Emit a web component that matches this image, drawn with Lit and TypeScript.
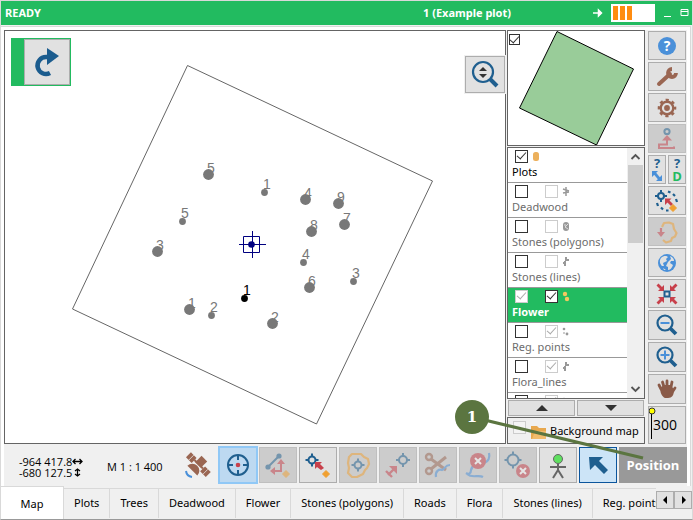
import { LitElement, html, svg, css } from "lit";
import { customElement, property, state } from "lit/decorators.js";
import { classMap } from "lit/directives/class-map.js";

const BLUE = "#1f5f8f";
const SKY = "#4a90d9";
const RED = "#c8404b";
const BROWN = "#9a6652";
const ORANGE = "#f0a030";

const crosshair = (x: number, y: number, r: number) => svg`
  <g transform="translate(${x} ${y})" fill="none" stroke=${BLUE} stroke-width="2">
    <circle r=${r}></circle>
    <path d="M0 ${-r}v-3M0 ${r}v3M${-r} 0h-3M${r} 0h3"></path>
  </g>`;

const lens = svg`
  <circle cx="-2" cy="-2" r="7.500" fill="none" stroke=${BLUE} stroke-width="2.200"></circle>
  <path d="M3.500 3.500L9 9" stroke=${BLUE} stroke-width="3.800"></path>`;

const cancel = (x: number, y: number, r: number) => svg`
  <circle cx=${x} cy=${y} r=${r} fill=${RED}></circle>
  <path transform="translate(${x} ${y})" d="M-3-3L3 3M3-3L-3 3" stroke="#fff" stroke-width="2"></path>`;

const inward = svg`<path d="M-10.500-8.500L-8.500-10.500L-5-7L-3-9V-3H-9L-7-5z" fill=${RED}></path>`;

const icons: Record<string, unknown> = {
  help: svg`<circle r="9" fill=${SKY}></circle>
    <text y="5" text-anchor="middle" class="glyph" font-size="14" fill="#fff">?</text>`,
  wrench: svg`<path d="M-8 7L3-3" stroke=${BROWN} stroke-width="4" stroke-linecap="round"></path>
    <path d="M5-8A4 4 0 1 0 9-4" fill="none" stroke=${BROWN} stroke-width="3.800"></path>`,
  gear: svg`<circle r="6.300" fill="none" stroke=${BROWN} stroke-width="2.400"></circle>
    <circle r="8" fill="none" stroke=${BROWN} stroke-width="2.600" stroke-dasharray="3.140 3.140" stroke-dashoffset="1.570"></circle>
    <circle r="2.900" fill=${BROWN}></circle>`,
  raise: svg`<circle cy="-7.500" r="2.600" fill="none" stroke=${BLUE} stroke-width="2"></circle>
    <path d="M0-4L5 1.500h-10z" fill=${RED}></path>
    <path d="M0 1V5.500H-8V9H7V7.500" fill="none" stroke=${RED} stroke-width="2"></path>`,
  helpMove: svg`<text y="-2" text-anchor="middle" class="glyph" font-size="13" fill=${BLUE}>?</text>
    <path d="M-5 1h6l-6 6zM5 11h-6l6-6zM-3.500 4L-1.500 2L3.500 8L1.500 10z" fill=${SKY}></path>`,
  helpData: svg`<text y="-2" text-anchor="middle" class="glyph" font-size="13" fill=${BLUE}>?</text>
    <text y="11" text-anchor="middle" class="glyph" font-size="13" fill="#22bb60">D</text>`,
  trace: svg`${crosshair(-6, -5, 3)}
    <path d="M-2-2.500h6.500L2.500-.5L6 3L4 5L.5 1.500L-2 4z" fill=${RED}></path>
    <path d="M1-9.500l2.500 1M6-7l2 2M9-2l1 3M-10 2l1 3M-6 6.500l2 2M-1 9.500l2.500 0" stroke=${BLUE} stroke-width="2.200"></path>
    <path d="M6 3.500l3.500 3.500l-3.500 3.500l-3.500-3.500z" fill=${ORANGE} stroke=${ORANGE}></path>`,
  lasso: svg`<path d="M-5-5L-3-9L2-9.500L6-8L7-3L9.500 1L8 4.500L5 6L4 9L-1 10.500L-4 8" fill="none" stroke=${ORANGE} stroke-width="2.200" stroke-linejoin="round"></path>
    <path d="M-6-4V1" stroke=${RED} stroke-width="2.200"></path><path d="M-10 0h8L-6 5z" fill=${RED}></path>`,
  globe: svg`<circle r="9" fill=${SKY}></circle>
    <path d="M-6-5C-3-8 0-7 1-6L-1-4L0-2L-4 0L-3 3L-5 3C-7 1-8-2-6-5zM3-7C6-6 7-4 7-2L4-2L3 0L6 2C5 5 3 7 1 7L1 4L-1 3L1-1L4-4zM-4 5L-1 7L-3 7z" fill="#e1e1e1"></path>`,
  center: svg`${inward}<g transform="rotate(90)">${inward}</g><g transform="rotate(180)">${inward}</g><g transform="rotate(270)">${inward}</g>
    <rect x="-2.500" y="-2.500" width="5" height="5" fill="#e1e1e1" stroke=${BLUE} stroke-width="2"></rect>`,
  zoomOut: svg`${lens}<path d="M-6.500-2h9" stroke=${SKY} stroke-width="2"></path>`,
  zoomIn: svg`${lens}<path d="M-6.500-2h9M-2-6.500v9" stroke=${SKY} stroke-width="2"></path>`,
  hand: svg`<path d="M-6 0L-8-4M-3-2L-4.500-7M0-3L0-8M4-2L5-7M6 2L8-1" stroke="#8a5a48" stroke-width="2.800" stroke-linecap="round"></path>
    <path d="M-7-1L-3-4L4-4L7 1C7 6 5 9 1 9H-2C-5 8-7 3-7-1z" fill="#8a5a48"></path>`,
  target: svg`<circle r="10" fill="none" stroke=${BLUE} stroke-width="2"></circle>
    <path d="M0-10v5M0 10v-5M-10 0h5M10 0h-5" stroke=${BLUE} stroke-width="2"></path><circle r="2.300" fill=${RED}></circle>`,
  editLine: svg`<path d="M-10 2L1-9" stroke=${BLUE} stroke-width="2"></path>
    <circle cx="-10" cy="2" r="2.600" fill=${BLUE}></circle><circle cx="1" cy="-9" r="2.600" fill=${BLUE}></circle>
    <path d="M3-2V6H-4" fill="none" stroke=${RED} stroke-width="2"></path>
    <path d="M3-6l4 5h-8zM-8 6l5-4v8z" fill=${RED}></path><path d="M8 5.500l3.500 3.500l-3.500 3.500l-3.500-3.500z" fill=${ORANGE} stroke=${ORANGE}></path>`,
  addPoint: svg`${crosshair(-6, -5, 3.5)}
    <path d="M-3-3h7L2-1L6 3L3 5L-1 2L-3 4z" fill=${RED}></path><path d="M8 5.500l3.500 3.500l-3.500 3.500l-3.500-3.500z" fill=${ORANGE} stroke=${ORANGE}></path>`,
  polygon: svg`<path d="M-6-11H3L6-8L10-6L11-1L9 3L7 5L5 9L-1 12H-6L-10 8L-9 3L-10-2L-9-8z" fill="none" stroke=${ORANGE} stroke-width="2.200" stroke-linejoin="round"></path>
    ${crosshair(0, 0, 3.5)}`,
  shift: svg`${crosshair(5, -5, 4)}<path d="M-10 10L-4 4M-12 6L-6 12" stroke=${RED} stroke-width="2.400"></path>
    <path d="M-1 1v8l-8-8z" fill=${RED}></path>`,
  scissors: svg`<g stroke=${BROWN} stroke-width="2.400" fill="none"><circle cx="-9" cy="-8" r="3"></circle><circle cx="-9" cy="6" r="3"></circle>
    <path d="M-7-6L8 5M-7 4L8-8" stroke-width="3"></path></g>
    <path d="M-2 12C-3 6 1 4 4 5C7 4 7 0 12 0" fill="none" stroke=${SKY} stroke-width="2.200"></path>`,
  dropLine: svg`<path d="M-12 8C-9 10-7 8-7 5C-6 0 0-3 5-2C11-3 12-8 11-12M-11 9C-5 14 0 9 5 12" fill="none" stroke=${SKY} stroke-width="2.200"></path>
    ${cancel(0, -4, 8)}`,
  dropPoint: svg`${crosshair(-5, -5, 5.5)}${cancel(5, 6, 7)}`,
  person: svg`<path d="M0-1V6M-8 2H8M0 5L-5 13M0 5L5 13" fill="none" stroke="#666" stroke-width="2"></path>
    <circle cy="-6" r="4.500" fill="#5fe060" stroke="#666"></circle>`,
  pointer: svg`<path d="M-9-8H5L1-4L10 5L6 9L-3 0L-8 5z" fill=${BLUE}></path>`,
  scale: svg`<circle cx="-2" cy="-3" r="10" fill="none" stroke=${BLUE} stroke-width="2.200"></circle>
    <path d="M5 4L12 11" stroke=${BLUE} stroke-width="4"></path>
    <path d="M-2-8l4 4h-8zM-2 3l4-4h-8z" fill="#333"></path>`,
  redo: svg`<path d="M2-5H-1A8.500 8.500 0 1 0 3 11" fill="none" stroke="#1b5c8e" stroke-width="4.500"></path>
    <path d="M0-14L12-6L0 3z" fill="#1b5c8e"></path>`,
  satellite: svg`<g transform="rotate(45)" fill=${BROWN}><rect x="-14" y="-4" width="8" height="7"></rect><rect x="6" y="-4" width="8" height="7"></rect>
    <rect x="-4" y="-9" width="8" height="9"></rect><rect x="-6" y="-2" width="12" height="2"></rect><path d="M-7 8A7 7 0 0 1 7 8z"></path>
    <path d="M-10-4v7M10-4v7" stroke="#f0f0f0" stroke-width=".7"></path></g>
    <path d="M-12 6A7 7 0 0 0-6 12" fill="none" stroke=${SKY} stroke-width="2"></path>`,
};

@customElement("tool-icon")
class ToolIcon extends LitElement {
  static styles = css`
    :host { display: block; flex: none; width: 28px; height: 28px; }
    svg { display: block; overflow: visible; }
    .glyph { font-family: "Open Sans", sans-serif; font-weight: 700; }
  `;
  @property() name = "";
  render() {
    return html`<svg width="28" height="28" viewBox="-14 -14 28 28" aria-hidden="true">${icons[this.name]}</svg>`;
  }
}

type Dot = [number, number, string];
const trees: Dot[] = [
  [208, 174, "5"], [305, 199, "4"], [338, 203, "9"], [344, 224, "7"], [311, 231, "8"],
  [157, 251, "3"], [309, 287, "6"], [189, 309, "1"], [272, 323, "2"],
];
const herbs: Dot[] = [[264, 192, "1"], [182, 221, "5"], [303, 262, "4"], [353, 281, "3"], [211, 315, "2"]];

@customElement("plot-map")
class PlotMap extends LitElement {
  static styles = css`
    :host { display: block; position: relative; min-height: 0; background: #fff; border: 1px solid #646464; font-family: "Liberation Sans", Arial, sans-serif; }
    .canvas { display: block; width: 100%; height: 100%; }
    .num { font-size: 14px; fill: #787878; }
    .dot { fill: #787878; }
    .current { fill: #000; }
    button { display: grid; place-items: center; padding: 0; border: 1px solid #adadad; background: #e1e1e1; }
    .undo { position: absolute; left: 6px; top: 7px; width: 60px; height: 48px; box-sizing: border-box; display: flex; padding: 1px 1px 1px 13px; background: #22bb60; }
    .undo button { flex: 1; }
    .scale { position: absolute; right: 0; top: 25px; width: 40px; height: 37px; outline: 1px solid #f0f0f0; }
  `;
  private mark([x, y, n]: Dot, r: number, lift: number, current = false) {
    return svg`<circle class=${current ? "current" : "dot"} cx=${x + 0.5} cy=${y + 0.5} r=${r}></circle>
      <text class=${current ? "num current" : "num"} x=${x - 1} y=${y - lift}>${n}</text>`;
  }
  render() {
    return html`
      <svg class="canvas" viewBox="5 31 500 412" role="img" aria-label="Plot map">
        <path d="M187.500 65.500L432.500 181L316.500 424L72.500 309z" fill="none" stroke="#666" stroke-width="1"></path>
        ${trees.map((t) => this.mark(t, 5.4, 1))}
        ${herbs.map((t) => this.mark(t, 3.4, 3))}
        ${this.mark([244, 298, "1"], 3.4, 3, true)}
        <path d="M243.500 236.500h16v16h-16zM239 244.500h27M252.500 231v27" fill="none" stroke="#000080"></path>
        <circle cx="251.500" cy="244.500" r="3.300" fill="#000080"></circle>
      </svg>
      <div class="undo"><button aria-label="Repeat"><tool-icon name="redo"></tool-icon></button></div>
      <button class="scale" aria-label="Set scale"><tool-icon name="scale"></tool-icon></button>
    `;
  }
}

interface Layer { name: string; shown: boolean; edit?: boolean; locked?: boolean; kind: string; state?: string }
const layers: Layer[] = [
  { name: "Plots", shown: true, kind: "area", state: "strong" },
  { name: "Deadwood", shown: false, edit: false, kind: "wood" },
  { name: "Stones (polygons)", shown: false, edit: false, kind: "stone" },
  { name: "Stones (lines)", shown: false, edit: false, kind: "line" },
  { name: "Flower", shown: true, edit: true, locked: true, kind: "flower", state: "selected" },
  { name: "Reg. points", shown: false, edit: true, kind: "points" },
  { name: "Flora_lines", shown: false, edit: true, kind: "line" },
  { name: "", shown: false, edit: true, kind: "points" },
];
const symbols: Record<string, unknown> = {
  area: svg`<rect x="3" y="1" width="6" height="9" rx="2.500" fill="#ecb05c"></rect>`,
  wood: svg`<path d="M6 1V10M3 3L9 5M3 7L9 6" stroke="#999" stroke-width="1.500"></path>`,
  stone: svg`<rect x="3" y="1" width="6" height="9" rx="3" fill="#999"></rect><path d="M8 3L5 6L8 8M4 4h2" stroke="#ddd" fill="none"></path>`,
  line: svg`<path d="M6 1V5M5 5V10M3 7H6M6 4H9" stroke="#999" stroke-width="2"></path>`,
  flower: svg`<circle cx="5" cy="3" r="2.200" fill="#f4c860"></circle><circle cx="7" cy="8" r="2.200" fill="#f4c860"></circle>`,
  points: svg`<circle cx="4" cy="3" r="1.300" fill="#999"></circle><circle cx="7" cy="8" r="1.400" fill="#999"></circle><circle cx="4" cy="7" r="1" fill="#bbb"></circle>`,
};

const tick = css`
  input[type="checkbox"] { appearance: none; flex: none; display: grid; place-items: center; width: 13px; height: 13px; margin: 0; border: 1px solid #333; background: #fff; }
  input[type="checkbox"]:checked::after { content: ""; width: 8px; height: 4px; margin-top: -3px; border: solid #333; border-width: 0 0 1px 1px; transform: rotate(-48deg); }
  input[type="checkbox"].faint { border-color: #ccc; }
  input[type="checkbox"].faint:checked::after { border-color: #aaa; }
`;

@customElement("layer-panel")
class LayerPanel extends LitElement {
  static styles = [tick, css`
    :host { display: flex; flex-direction: column; gap: 1px; min-height: 0; font: 11px/16px "Noto Sans", sans-serif; }
    .overview { display: grid; flex: none; height: 114px; border: 1px solid #646464; background: #fff; }
    .overview > * { grid-area: 1 / 1; }
    .overview svg { width: 100%; height: 114px; }
    .overview input { margin: 3px 1px; width: 11px; height: 11px; }
    .list { display: flex; flex: 1; min-height: 0; overflow: hidden; border: 1px solid #646464; background: #fff; }
    ul { flex: 1; min-width: 0; margin: 0; padding: 0; overflow: hidden; list-style: none; }
    li { box-sizing: border-box; height: 35px; padding: 1px 0 0 4px; border-bottom: 1px solid #999; color: #6c6c6c; }
    .row { display: flex; align-items: center; height: 14px; padding-left: 3px; }
    .row .edit { margin-left: 17px; }
    .row svg { margin-left: 2px; }
    .name { display: block; margin-top: 1px; white-space: nowrap; }
    .strong { color: #000; }
    .selected { background: #22bb60; color: #fff; font-weight: 700; }
    .bar { display: flex; flex-direction: column; width: 17px; background: #f0f0f0; }
    .bar svg { flex: none; }
    .thumb { height: 78px; margin: 0 1px; background: #cdcdcd; }
    .space { flex: 1; }
    .order { display: flex; flex: none; gap: 2px; padding: 0 1px; background: #f0f0f0; }
    .order button { flex: 1; display: grid; place-items: center; height: 16px; padding: 0; border: 1px solid #adadad; background: #e1e1e1; }
    .base { display: flex; flex: none; align-items: center; height: 25px; padding-left: 5px; border: 1px solid #646464; background: #f0f0f0; color: #000; white-space: nowrap; }
    .base input { background: #f4f4f4; margin-bottom: 6px; }
    .base svg { margin: 2px 4px 0 5px; }
  `];
  private item(l: Layer) {
    return html`<li class=${l.state ?? ""}>
      <div class="row">
        <input type="checkbox" class=${l.locked ? "faint" : ""} aria-label="Show ${l.name}" .checked=${l.shown}>
        ${l.edit === undefined ? "" : html`<input type="checkbox" class="edit ${l.locked ? "" : "faint"}" aria-label="Edit ${l.name}" .checked=${l.edit}>`}
        <svg width="11" height="11" viewBox="0 0 11 11">${symbols[l.kind]}</svg>
      </div>
      <span class="name">${l.name}</span>
    </li>`;
  }
  render() {
    return html`
      <div class="overview">
        <svg viewBox="508 31 136 114" aria-hidden="true"><path d="M557 31.500L633.500 69L596.500 145L519.500 108z" fill="#99cc99" stroke="#000"></path></svg>
        <input type="checkbox" aria-label="Show overview" checked>
      </div>
      <div class="list">
        <ul>${layers.map((l) => this.item(l))}</ul>
        <div class="bar">
          <svg width="17" height="17"><path d="M4.500 11L8.500 7L12.500 11" fill="none" stroke="#555" stroke-width="1.800"></path></svg>
          <div class="thumb"></div><div class="space"></div>
          <svg width="17" height="17"><path d="M4.500 6L8.500 10L12.500 6" fill="none" stroke="#555" stroke-width="1.800"></path></svg>
        </div>
      </div>
      <div class="order">
        <button aria-label="Move up"><svg width="12" height="6"><path d="M6 0L12 6H0z" fill="#333"></path></svg></button>
        <button aria-label="Move down"><svg width="12" height="6"><path d="M6 6L12 0H0z" fill="#333"></path></svg></button>
      </div>
      <label class="base">
        <input type="checkbox" class="faint">
        <svg width="15" height="14"><path d="M0 1h6l2 2h7v11H0z" fill="#e8a84e"></path><path d="M4 6h11v8H1z" fill="#f2bc6c"></path></svg>
        Background map
      </label>
    `;
  }
}

interface Tool { icon: string; label: string; off?: boolean }
const sideTop: Tool[] = [
  { icon: "help", label: "Help" }, { icon: "wrench", label: "Tools" }, { icon: "gear", label: "Settings" },
  { icon: "raise", label: "Reference height", off: true },
];
const sideMid: Tool[] = [
  { icon: "trace", label: "Trace points" }, { icon: "lasso", label: "Close area", off: true },
  { icon: "globe", label: "Whole map" }, { icon: "center", label: "Center" },
];
const sideLow: Tool[] = [
  { icon: "zoomOut", label: "Zoom out" }, { icon: "zoomIn", label: "Zoom in" }, { icon: "hand", label: "Pan" },
];
const actions: Tool[] = [
  { icon: "editLine", label: "Edit line", off: true }, { icon: "addPoint", label: "Add point" },
  { icon: "polygon", label: "Polygon", off: true }, { icon: "shift", label: "Shift", off: true },
  { icon: "scissors", label: "Cut", off: true }, { icon: "dropLine", label: "Delete line", off: true },
  { icon: "dropPoint", label: "Delete point", off: true }, { icon: "person", label: "Operator", off: false },
];
const tabs = ["Map", "Plots", "Trees", "Deadwood", "Flower", "Stones (polygons)", "Roads", "Flora", "Stones (lines)", "Reg. points"];

@customElement("app-root")
class AppRoot extends LitElement {
  static styles = css`
    :host { display: block; font: 11px/16px "Noto Sans", sans-serif; color: #000; }
    .window { position: relative; box-sizing: border-box; display: flex; flex-direction: column; height: 100vh; min-height: 520px; overflow: hidden; border: 1px solid #d9d9d9; border-bottom-color: #999; background: #f0f0f0; }
    button { box-sizing: border-box; display: grid; place-items: center; padding: 0; border: 1px solid #adadad; background: #e1e1e1; color: inherit; font: inherit; overflow: hidden; }
    button:disabled { border-color: #bfbfbf; background: #ccc; }
    button:disabled tool-icon { opacity: 0.5; }
    header { display: flex; flex: none; align-items: center; height: 24px; padding: 0 2px 0 4px; background: #22bb60; color: #fff; font-weight: 700; }
    .title { flex: 1; padding-right: 82px; text-align: right; }
    .battery { display: flex; gap: 2px; width: 42px; height: 14px; margin: 0 9px 0 8px; padding: 2px 0 2px 2px; background: #fff; }
    .battery i { width: 5px; background: #ff8c10; }
    .body { flex: 1; display: flex; flex-direction: column; min-height: 0; margin-right: 1px; border-top: 1px solid #d9d9d9; border-right: 1px solid #d9d9d9; margin-top: 1px; padding: 3px 3px 0 3px; background: #fff; }
    .work { flex: 1; min-height: 0; display: grid; grid-template-columns: 1fr 138px 41px; gap: 0 1px; background: #f0f0f0; }
    .side { display: flex; flex-direction: column; gap: 2px; padding: 1px 1px 0 2px; }
    .side button { flex: none; height: 29px; }
    .side .tall { height: 30px; }
    .pair { display: grid; grid-template-columns: 1fr 1fr; gap: 2px; }
    .pair tool-icon { margin: 0 -6px; }
    .side .width { flex: 1; display: flex; align-items: center; justify-content: flex-start; padding: 0; font: 14px/16px "Open Sans", sans-serif; }
    .width svg { flex: none; align-self: flex-start; margin-right: -3px; }
    .tools { flex: none; display: flex; align-items: flex-start; gap: 2px; box-sizing: border-box; height: 42px; padding-top: 3px; background: #f0f0f0; }
    .tools button { width: 38px; height: 36px; flex: none; }
    .coords { flex: none; width: 84px; padding: 9px 0 0 15px; box-sizing: border-box; line-height: 11px; white-space: nowrap; }
    .line { display: flex; align-items: center; }
    .line svg { flex: none; }
    .coords, .zoom { font-family: "Open Sans", sans-serif; }
    .zoom { flex: 1; padding: 12px 0 0 17px; white-space: nowrap; }
    .gps { margin: 4px 5px 0 0; }
    .tools .lit { border-color: #90c8f6; background: #bdd9f1; box-shadow: 0 0 0 1px #90c8f6; }
    .tools .chosen { border-color: #0b559c; background: #cce4f7; }
    .tools .mode { width: 68px; border-color: #999; background: #999; color: #fff; font: 700 13px/16px "Open Sans", sans-serif; }
    nav { flex: none; display: flex; height: 33px; }
    .tabs { flex: 1; display: flex; min-width: 0; overflow: hidden; }
    .tabs button { flex: none; height: 30px; margin-top: 2px; padding: 0 10px 2px; border: solid #d9d9d9; border-width: 1px 1px 0 0; background: #f0f0f0; white-space: nowrap; }
    .tabs .active { width: 63px; height: 33px; margin: 0; padding-top: 3px; background: #fff; }
    .pager { display: flex; flex: none; padding: 5px 0; }
    .pager button { width: 18px; height: 18px; }
    .callout { position: absolute; right: 46px; bottom: 58px; pointer-events: none; }
    .callout text { font: 700 15px "DejaVu Serif", serif; fill: #fff; }
  `;
  @state() private tab = "Map";
  private tool(t: Tool, cls = "") {
    return html`<button class=${cls} aria-label=${t.label} ?disabled=${t.off}><tool-icon name=${t.icon}></tool-icon></button>`;
  }
  render() {
    return html`
      <div class="window">
        <header>
          <span>READY</span><span class="title">1 (Example plot)</span>
          <svg width="10" height="10"><path d="M0 5h6M5.500 2l3 3l-3 3z" fill="#fff" stroke="#fff" stroke-width="1.500"></path></svg>
          <span class="battery"><i></i><i></i><i></i></span>
          <svg width="26" height="10"><path d="M0 8.500h7M17 1.500h7v6h-7zM17 3.500h7" fill="none" stroke="#fff"></path></svg>
        </header>
        <div class="body">
          <div class="work">
            <plot-map></plot-map>
            <layer-panel></layer-panel>
            <div class="side">
              ${sideTop.map((t) => this.tool(t))}
              <div class="pair">${this.tool({ icon: "helpMove", label: "Help on moving" })}${this.tool({ icon: "helpData", label: "Help on data" })}</div>
              ${sideMid.map((t) => this.tool(t))}
              ${sideLow.map((t) => this.tool(t, "tall"))}
              <button class="width"><svg width="7" height="34"><path d="M2.500 3v29" stroke="#000"></path><circle cx="3" cy="4" r="3" fill="#ff0" stroke="#333"></circle></svg>300</button>
            </div>
          </div>
          <div class="tools">
            <div class="coords">
              <div class="line">-964 417.8<svg width="11" height="7"><path d="M1 3.500h9M3.500 1L1 3.500L3.500 6M7.500 1L10 3.500L7.500 6" fill="none" stroke="#000" stroke-width="1.300"></path></svg></div>
              <div class="line">-680 127.5<svg width="11" height="9"><path d="M5.500 1v7M3 3l2.500-2L8 3M3 6l2.500 2L8 6" fill="none" stroke="#000" stroke-width="1.300"></path></svg></div>
            </div>
            <div class="zoom">M 1 : 1 400</div>
            <tool-icon class="gps" name="satellite"></tool-icon>
            ${this.tool({ icon: "target", label: "Target" }, "lit")}
            ${actions.map((t) => this.tool(t))}
            ${this.tool({ icon: "pointer", label: "Select" }, "chosen")}
            <button class="mode">Position</button>
          </div>
        </div>
        <nav>
          <div class="tabs" role="tablist">
            ${tabs.map((t) => html`<button role="tab" aria-selected=${t === this.tab} class=${classMap({ active: t === this.tab })} @click=${() => (this.tab = t)}>${t}</button>`)}
          </div>
          <div class="pager">
            <button aria-label="Previous tabs"><svg width="5" height="8"><path d="M4 0v8L0 4z"></path></svg></button>
            <button aria-label="Next tabs"><svg width="5" height="8"><path d="M1 0v8l4-4z"></path></svg></button>
          </div>
        </nav>
        <svg class="callout" width="192" height="62" viewBox="453 398 192 62" role="img" aria-label="Callout 1">
          <path d="M471 416L642 457" stroke="#5b7540" stroke-width="3"></path>
          <circle cx="471" cy="416" r="17" fill="#5b7540"></circle>
          <text x="471" y="421" text-anchor="middle">1</text>
        </svg>
      </div>
    `;
  }
}
